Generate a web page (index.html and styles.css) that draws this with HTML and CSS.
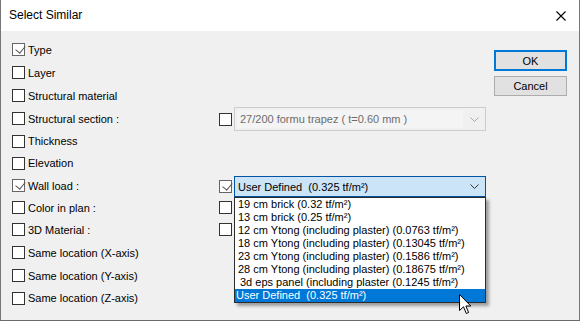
FILE: index.html
```html
<!DOCTYPE html>
<html lang="en">
<head>
    <meta charset="UTF-8">
    <meta name="viewport" content="width=device-width, initial-scale=1.0">
    <title>Select Similar</title>
    <link rel="stylesheet" href="styles.css">
</head>
<body>
    <div class="window">
        <div class="titlebar">
            <span class="title">Select Similar</span>
            <svg class="close" width="10" height="10" viewBox="0 0 10 10">
                <path d="M0.5 0.5 L9.5 9.5 M9.5 0.5 L0.5 9.5" stroke="#000" stroke-width="1.1" fill="none"/>
            </svg>
        </div>
        <div class="content">
            <div class="options">
                <label class="opt"><span class="box checked"></span>Type</label>
                <div></div>
                <label class="opt"><span class="box"></span>Layer</label>
                <div></div>
                <label class="opt"><span class="box"></span>Structural material</label>
                <div></div>
                <label class="opt"><span class="box"></span>Structural section :</label>
                <div class="extra top">
                    <span class="box"></span>
                    <div class="combo disabled">
                        <span class="combo-text">27/200 formu trapez ( t=0.60 mm )</span>
                        <svg class="arrow" width="9" height="5" viewBox="0 0 9 5"><path d="M0.5 0.5 L4.5 4.5 L8.5 0.5" stroke="#a8a8a8" fill="none"/></svg>
                    </div>
                </div>
                <label class="opt"><span class="box"></span>Thickness</label>
                <div></div>
                <label class="opt"><span class="box"></span>Elevation</label>
                <div></div>
                <label class="opt"><span class="box checked"></span>Wall load :</label>
                <div class="extra wall">
                    <span class="box checked"></span>
                    <div class="combo active">
                        <span class="combo-text">User Defined&nbsp; (0.325 tf/m²)</span>
                        <svg class="arrow" width="9" height="5" viewBox="0 0 9 5"><path d="M0.5 0.5 L4.5 4.5 L8.5 0.5" stroke="#333" fill="none"/></svg>
                        <ul class="dropdown">
                            <li>19 cm brick (0.32 tf/m²)</li>
                            <li>13 cm brick (0.25 tf/m²)</li>
                            <li>12 cm Ytong (including plaster) (0.0763 tf/m²)</li>
                            <li>18 cm Ytong (including plaster) (0.13045 tf/m²)</li>
                            <li>23 cm Ytong (including plaster) (0.1586 tf/m²)</li>
                            <li>28 cm Ytong (including plaster) (0.18675 tf/m²)</li>
                            <li class="indent">3d eps panel (including plaster (0.1245 tf/m²)</li>
                            <li class="selected">User Defined&nbsp; (0.325 tf/m²)</li>
                        </ul>
                    </div>
                </div>
                <label class="opt"><span class="box"></span>Color in plan :</label>
                <div class="extra"><span class="box"></span></div>
                <label class="opt"><span class="box"></span>3D Material :</label>
                <div class="extra"><span class="box"></span></div>
                <label class="opt"><span class="box"></span>Same location (X-axis)</label>
                <div></div>
                <label class="opt"><span class="box"></span>Same location (Y-axis)</label>
                <div></div>
                <label class="opt"><span class="box"></span>Same location (Z-axis)</label>
                <div></div>
            </div>
            <div class="buttons">
                <button class="btn default">OK</button>
                <button class="btn">Cancel</button>
            </div>
        </div>
        <svg class="cursor" width="13" height="21" viewBox="0 0 13 21">
            <path d="M0.5 0.5 L0.5 16.5 L4.5 12.8 L7.3 19.5 L9.6 18.5 L6.9 12 L11.8 12 Z" fill="#fff" stroke="#000" stroke-width="1" stroke-linejoin="miter"/>
        </svg>
    </div>
</body>
</html>
```

FILE: styles.css
```css
body {
    margin: 0;
    font-family: "Liberation Sans", Arial, sans-serif;
    font-size: 11px;
    color: #000;
    background: #f0f0f0;
}
.window {
    position: relative;
    width: 580px;
    height: 321px;
    box-sizing: border-box;
    border: 1px solid #777;
    border-top: none;
    border-bottom: 1px solid #6a6a6a;
    background: #f0f0f0;
    overflow: hidden;
}
.titlebar {
    height: 31px;
    background: #fff;
    display: flex;
    align-items: center;
    justify-content: space-between;
    padding: 0 12px 0 8px;
}
.title {
    font-size: 12px;
    padding-bottom: 1px;
}
.close {
    margin-right: 1px;
}
.content {
    display: flex;
    padding: 7px 11px 0 11px;
}
.options {
    display: grid;
    grid-template-columns: 207px 267px;
    grid-template-rows: 23px 23px 23px 23px 22px 22px 23px 21px 23px 23px 23px 22px;
    align-items: center;
}
.opt {
    display: flex;
    align-items: center;
}
.box {
    display: inline-block;
    width: 11px;
    height: 11px;
    border: 1px solid #333;
    background: #fff;
    margin-right: 3px;
    flex: none;
    position: relative;
}
.box.checked {
    border-color: #666;
}
.box.checked::after {
    content: "";
    position: absolute;
    left: 3px;
    top: 0px;
    width: 5px;
    height: 8px;
    border-right: 1px solid #555;
    border-bottom: 1px solid #555;
    transform: rotate(40deg) translate(1px, -1px);
}
.extra {
    display: flex;
    align-items: center;
}
.extra .box {
    margin-right: 2px;
}
.extra.top {
    align-self: start;
}
.extra.wall {
    align-self: start;
    margin-top: 2px;
}
.combo {
    position: relative;
    width: 252px;
    box-sizing: border-box;
    display: flex;
    align-items: center;
    justify-content: space-between;
}
.combo.disabled {
    height: 24px;
    border: 1px solid #ccc;
    background: #f0f0f0;
    color: #6d6d6d;
    padding: 2px 6px 2px 2px;
}
.combo.disabled .combo-text {
    flex: 1;
    align-self: stretch;
    display: flex;
    align-items: center;
    background: #f4f4f4;
    padding-left: 3px;
    margin-right: 7px;
}
.combo.active {
    height: 21px;
    border: 1px solid #0054a6;
    background: #cce4f7;
    padding: 0 6px 0 3px;
}
.dropdown {
    position: absolute;
    left: -1px;
    top: 20px;
    width: 252px;
    box-sizing: border-box;
    margin: 0;
    padding: 0;
    list-style: none;
    background: #fff;
    border: 1px solid #2c2c2c;
    box-shadow: 3px 3px 3px rgba(0, 0, 0, 0.35);
    z-index: 2;
}
.dropdown li {
    height: 13px;
    line-height: 13px;
    padding-left: 3px;
    white-space: nowrap;
}
.dropdown li.indent {
    padding-left: 5px;
}
.dropdown li.selected {
    background: #0078d7;
    color: #fff;
    padding-left: 1px;
}
.buttons {
    display: flex;
    flex-direction: column;
    gap: 5px;
    margin-left: 8px;
    margin-top: 12px;
}
.btn {
    width: 73px;
    height: 20px;
    box-sizing: border-box;
    font-family: "Liberation Sans", Arial, sans-serif;
    font-size: 11px;
    background: #e1e1e1;
    border: 1px solid #adadad;
    padding: 0;
    color: #000;
}
.btn.default {
    border: 2px solid #0078d7;
    height: 21px;
}
.cursor {
    position: absolute;
    left: 458px;
    top: 294px;
    z-index: 3;
}
```
